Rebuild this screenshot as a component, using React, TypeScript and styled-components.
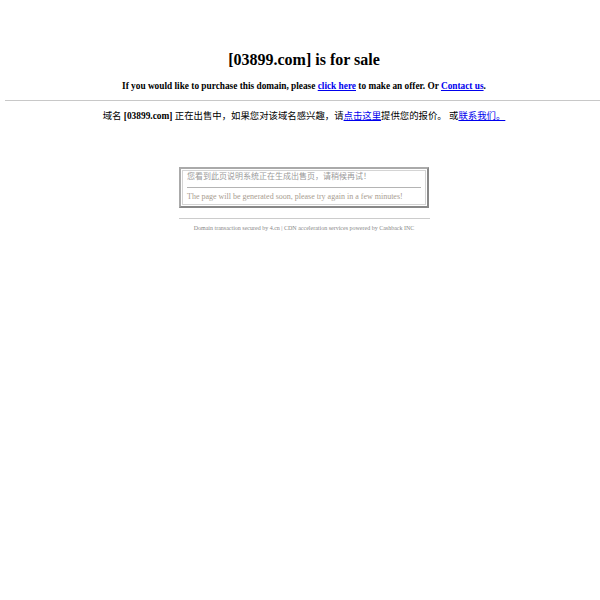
import styled, { createGlobalStyle } from "styled-components";

const Global = createGlobalStyle`
  html, body {
    margin: 0;
    padding: 0;
    background: #fff;
  }
  body {
    font-family: "Liberation Serif", "Noto Sans CJK SC", serif;
    color: #000;
  }
`;

const Page = styled.div`
  padding: 50px 0 0 8px;
`;

const Title = styled.h1`
  margin: 0;
  text-align: center;
  font-size: 16px;
  line-height: 20px;
  font-weight: bold;
`;

const Lead = styled.p`
  margin: 9px 0 0;
  text-align: center;
  font-size: 9.3px;
  line-height: 14px;
  font-weight: bold;
`;

const Link = styled.a`
  color: #0000ee;
  text-decoration: underline;
`;

const Rule = styled.hr`
  margin: 7px 0 0 -3px;
  border: 0;
  border-top: 1px solid #c8c8c8;
  height: 0;
`;

const Notice = styled.p`
  margin: 8px 0 0;
  text-align: center;
  font-size: 9.4px;
  line-height: 14px;
`;

const Strong = styled.b`
  font-weight: bold;
`;

const Center = styled.div`
  display: flex;
  flex-direction: column;
  align-items: center;
  margin-top: 44px;
`;

const Box = styled.div`
  width: 250px;
  box-sizing: border-box;
  border: 2px solid;
  border-color: #aaa #888 #888 #aaa;
  padding: 1px;
`;

const BoxInner = styled.div`
  border: 1px solid #d4d4d4;
  padding: 0 4px 2px;
`;

const BoxLine = styled.div<{ $tone: string; $height: number }>`
  font-size: 8px;
  line-height: ${(p) => p.$height}px;
  color: ${(p) => p.$tone};
  white-space: nowrap;
`;

const BoxRule = styled.div`
  border-top: 1px solid #b4b4b4;
  margin: 4px 0 3px;
`;

const Footer = styled.div`
  width: 251px;
  margin-top: 10px;
  border-top: 1px solid #ccc;
  padding-top: 5px;
  text-align: center;
  font-size: 6px;
  line-height: 8px;
  color: #888;
`;

export default function App() {
  return (
    <Page>
      <Global />
      <Title>[03899.com] is for sale</Title>
      <Lead>
        If you would like to purchase this domain, please <Link href="#">click here</Link> to make an
        offer. Or <Link href="#">Contact us</Link>.
      </Lead>
      <Rule />
      <Notice>
        域名 <Strong>[03899.com]</Strong> 正在出售中，如果您对该域名感兴趣，请<Link href="#">点击这里</Link>提供您的报价。
        或<Link href="#">联系我们。</Link>
      </Notice>
      <Center>
        <Box>
          <BoxInner>
            <BoxLine $tone="#9a9a9a" $height={12}>您看到此页说明系统正在生成出售页，请稍候再试！</BoxLine>
            <BoxRule />
            <BoxLine $tone="#a89c90" $height={11}>The page will be generated soon, please try again in a few minutes!</BoxLine>
          </BoxInner>
        </Box>
        <Footer>Domain transaction secured by 4.cn | CDN acceleration services powered by Cashback INC</Footer>
      </Center>
    </Page>
  );
}
